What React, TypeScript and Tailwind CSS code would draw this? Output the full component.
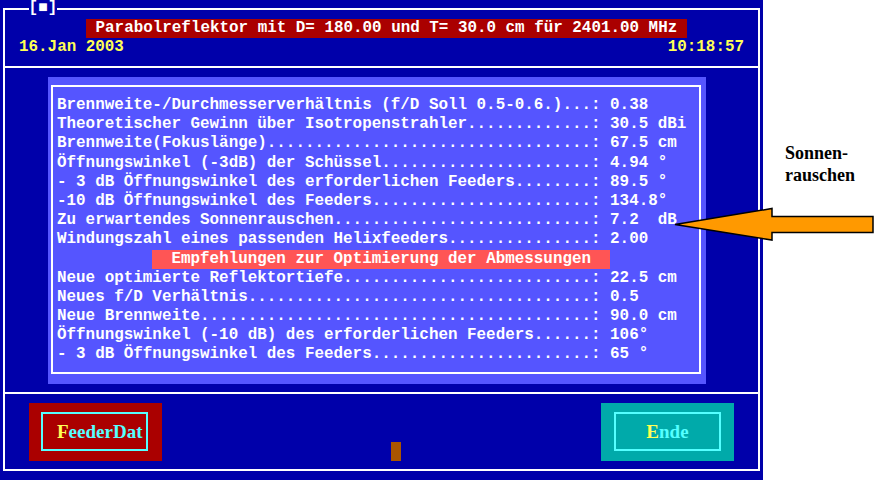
import React from "react";

// one text-mode cell of the 80x25 screen, scaled to 763x480
const mono = "font-['Liberation_Mono','DejaVu_Sans_Mono',monospace] text-[15.9px] font-bold";

const rows: ([string, string] | null)[] = [
  ["Brennweite-/Durchmesserverhältnis (f/D Soll 0.5-0.6.)", "0.38"],
  ["Theoretischer Gewinn über Isotropenstrahler", "30.5 dBi"],
  ["Brennweite(Fokuslänge)", "67.5 cm"],
  ["Öffnungswinkel (-3dB) der Schüssel", "4.94 °"],
  ["- 3 dB Öffnungswinkel des erforderlichen Feeders", "89.5 °"],
  ["-10 dB Öffnungswinkel des Feeders", "134.8°"],
  ["Zu erwartendes Sonnenrauschen", "7.2  dB"],
  ["Windungszahl eines passenden Helixfeeders", "2.00"],
  null,
  ["Neue optimierte Reflektortiefe", "22.5 cm"],
  ["Neues f/D Verhältnis", "0.5"],
  ["Neue Brennweite", "90.0 cm"],
  ["Öffnungswinkel (-10 dB) des erforderlichen Feeders", "106°"],
  ["- 3 dB Öffnungswinkel des Feeders", "65 °"],
];

const App: React.FC = () => {
  return (
    <div className="relative flex h-[480px] w-[874px] overflow-hidden bg-white">
      {/* text mode screen */}
      <div className="h-[480px] w-[763px] shrink-0 bg-[#0000aa] pl-[3px] pt-[8px]">
        <div className={`relative flex h-[463px] w-[757px] flex-col border-2 border-white text-white ${mono}`}>
          <span className="absolute left-[23.6px] top-[-11px] whitespace-pre bg-[#0000aa] leading-[19.2px]">[■]</span>

          {/* header */}
          <div className="h-[58px] border-b-2 border-white">
            <div className="ml-[81px] mt-[9.2px] h-[19.2px] w-[601px] whitespace-pre bg-[#aa0000] leading-[19.2px]">
              {" Parabolreflektor mit D= 180.00 und T= 30.0 cm für 2401.00 MHz"}
            </div>
            <div className="flex h-[19.2px] justify-between px-[14px] leading-[19.2px] text-[#ffff55]">
              <span>16.Jan 2003</span>
              <span>10:18:57</span>
            </div>
          </div>

          {/* results panel */}
          <div className="h-[326px] border-b-2 border-white">
            <div className="ml-[43px] mt-[9px] h-[307px] w-[658px] bg-[#5555ff] pb-[10px] pl-[3px] pr-[5px] pt-[8px]">
              <div className="h-full border-2 border-white pl-[4px] pt-[9px]">
                {rows.map((r, i) =>
                  r ? (
                    <div key={i} className="h-[19.2px] whitespace-pre leading-[19.2px]">
                      {r[0].padEnd(56, ".") + ": " + r[1]}
                    </div>
                  ) : (
                    <div key={i} className="h-[19.2px] leading-[19.2px]">
                      <span className="ml-[95.4px] inline-block h-[19.2px] w-[457.8px] whitespace-pre bg-[#ff5555]">
                        {"  Empfehlungen zur Optimierung der Abmessungen"}
                      </span>
                    </div>
                  )
                )}
              </div>
            </div>
          </div>

          {/* buttons */}
          <div className="mx-[24px] mt-[9px] flex h-[58px]">
            <div className="h-[58px] w-[133px] bg-[#aa0000] pb-[10px] pl-[12px] pr-[14px] pt-[9px]">
              <div className="flex h-full items-center border-2 border-[#55ffff] pl-[14px] pt-[1px] font-['Liberation_Serif',serif] text-[19px] font-bold text-[#55ffff]">
                <span className="text-[#ffff55]">F</span>eederDat
              </div>
            </div>
            <div className="mb-[0.5px] ml-[229px] h-[19px] w-[10px] self-end bg-[#aa5500]" />
            <div className="ml-auto h-[58px] w-[133px] bg-[#00aaaa] pb-[10px] pl-[13px] pr-[13px] pt-[9px]">
              <div className="flex h-full items-center justify-center border-2 border-[#55ffff] pt-[1px] font-['Liberation_Serif',serif] text-[19px] font-bold text-[#55ffff]">
                <span className="text-[#ffff55]">E</span>nde
              </div>
            </div>
          </div>
        </div>
      </div>

      {/* annotation column */}
      <div className="pl-[22px] pt-[142px] font-['Liberation_Serif',serif] text-[18px] font-bold leading-[22px] text-black">
        Sonnen-
        <br />
        rauschen
      </div>

      {/* arrow pointing at the sun noise value */}
      <svg className="pointer-events-none absolute left-0 top-0" width="874" height="480" viewBox="0 0 874 480">
        <polygon
          points="675,224.5 772,208.5 772,216.5 873,216.5 873,232.5 772,232.5 772,240 675,224.5"
          fill="#ff9900"
          stroke="#000"
          strokeWidth="1.5"
          strokeLinejoin="miter"
        />
      </svg>
    </div>
  );
};

export default App;
